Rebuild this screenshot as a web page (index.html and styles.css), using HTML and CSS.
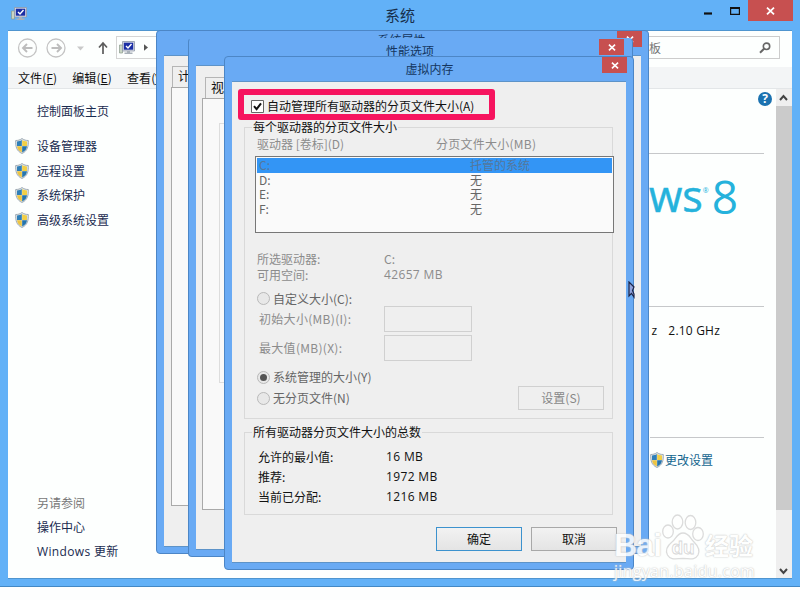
FILE: index.html
```html
<!DOCTYPE html>
<html lang="zh-CN">
<head>
  <meta charset="UTF-8" />
  <meta name="viewport" content="width=device-width, initial-scale=1.0"/>
  <title>系统</title>
  <link rel="stylesheet" href="styles.css">
</head>
<body>
  <!-- shared icons -->
  <svg class="defs" width="0" height="0">
    <symbol id="shield" viewBox="0 0 14 16">
      <path d="M7 .5C5 2 3 2.5.7 2.5.4 8.500 1.500 13 7 15.500 12.500 13 13.600 8.500 13.300 2.500 11 2.500 9 2 7 .5z" fill="#dfe6ea" stroke="#8d9ba5" stroke-width=".8"/>
      <path d="M6.800 2C5.300 3 4 3.400 2 3.500V8h4.800z" fill="#2f7fb8"/>
      <path d="M7.200 2C8.700 3 10 3.400 12 3.500V8H7.200z" fill="#f2cf45"/>
      <path d="M2 8.300c.3 3 2 4.900 4.800 6.200V8.300z" fill="#edc440"/>
      <path d="M12 8.300c-.3 3-2 4.900-4.800 6.200V8.300z" fill="#2675ad"/>
    </symbol>
    <symbol id="computer" viewBox="0 0 16 14">
      <path d="M.5 4h3v8h-3z" fill="#c9d6c4" stroke="#8a9a8c" stroke-width=".7"/>
      <path d="M3.500.5h12v9.500h-12z" fill="#d9dde5" stroke="#8f98a8" stroke-width=".8"/>
      <path d="M4.800 1.700h9.400v7H4.800z" fill="#1b2ea5"/>
      <path d="M7 5l2 2 3.500-4" fill="none" stroke="#fff" stroke-width="1.400"/>
      <path d="M8 10h3v1.500h2.500V13H5.500v-1.500H8z" fill="#a8b0b8"/>
    </symbol>
    <symbol id="cross" viewBox="0 0 9 8">
      <path d="M1 .7l7 6.600M8 .7L1 7.300" fill="none" stroke="#fff" stroke-width="1.800"/>
    </symbol>
  </svg>

  <div class="window main-window">
    <div class="main-title">
      <svg class="title-icon" width="16" height="14"><use href="#computer"/></svg>
      <h1>系统</h1>
      <div class="controls">
        <svg width="48" height="20" viewBox="0 0 48 20">
          <path d="M4 13.500h8" stroke="#111" stroke-width="2.200"/>
          <path d="M30.600 8h8.800v6.400h-8.800z" fill="none" stroke="#111" stroke-width="1.200"/>
          <path d="M30 8h10" stroke="#111" stroke-width="2"/>
        </svg>
        <div class="main-close"><svg width="9" height="8"><use href="#cross"/></svg></div>
      </div>
    </div>

    <div class="main-client">
      <div class="navbar">
        <svg width="100" height="24" viewBox="0 0 100 24">
          <g fill="none" stroke="#c4c4c4" stroke-width="1.300">
            <circle cx="19.500" cy="12" r="9"/>
            <circle cx="48" cy="12" r="9"/>
          </g>
          <path d="M24.500 12h-9M19 8l-4 4 4 4M43.500 12h9M49 8l4 4-4 4" fill="none" stroke="#bdbdbd" stroke-width="1.900"/>
          <path d="M69 10.500h7l-3.500 4z" fill="#c9c9c9"/>
          <path d="M95 18V7.500M91 11.500l4-4.500 4 4.500" fill="none" stroke="#5c5c5c" stroke-width="1.700"/>
        </svg>
        <div class="address">
          <svg width="16" height="14"><use href="#computer"/></svg>
          <svg width="4" height="7" viewBox="0 0 5 8"><path d="M0 0l5 4-5 4z" fill="#555"/></svg>
        </div>
        <div class="search">
          <span>搜索控制面板</span>
          <svg width="12" height="12" viewBox="0 0 12 12">
            <circle cx="7.500" cy="4.300" r="3.200" fill="none" stroke="#666" stroke-width="1.600"/>
            <path d="M5 6.800L1 10.800" stroke="#666" stroke-width="2"/>
          </svg>
        </div>
      </div>

      <div class="menubar">
        <span>文件(<u>F</u>)</span>
        <span>编辑(<u>E</u>)</span>
        <span>查看(<u>V</u>)</span>
      </div>

      <div class="main-body">
        <div class="sidebar">
          <a class="home">控制面板主页</a>
          <ul class="tasks">
            <li><svg width="14" height="16"><use href="#shield"/></svg>设备管理器</li>
            <li><svg width="14" height="16"><use href="#shield"/></svg>远程设置</li>
            <li><svg width="14" height="16"><use href="#shield"/></svg>系统保护</li>
            <li><svg width="14" height="16"><use href="#shield"/></svg>高级系统设置</li>
          </ul>
          <ul class="see-also">
            <li class="muted">另请参阅</li>
            <li>操作中心</li>
            <li class="latin">Windows 更新</li>
          </ul>
        </div>

        <div class="content">
          <div class="help">?</div>
          <div class="brand"><span>ows</span><sup>®</sup><b>8</b></div>
          <div class="cpu"><span>z</span><span>2.10 GHz</span></div>
          <div class="change"><svg width="14" height="16"><use href="#shield"/></svg>更改设置</div>
        </div>

        <div class="scrollbar">
          <svg width="16" height="17" viewBox="0 0 16 17"><path d="M4 11l3.500-4 3.500 4" fill="none" stroke="#444" stroke-width="2"/></svg>
          <div class="thumb"></div>
          <svg class="down" width="16" height="17" viewBox="0 0 16 17"><path d="M4 8l3.500 4L11 8" fill="none" stroke="#444" stroke-width="2"/></svg>
        </div>
      </div>
    </div>
  </div>

  <div class="window dialog props">
    <div class="dialog-title">
      <h2>系统属性</h2>
      <div class="close"><svg width="8" height="7"><use href="#cross"/></svg></div>
    </div>
    <div class="dialog-client">
      <div class="tab">计算机名</div>
      <div class="page"></div>
    </div>
  </div>

  <div class="window dialog perf">
    <div class="dialog-title">
      <h2>性能选项</h2>
      <div class="close"><svg width="8" height="7"><use href="#cross"/></svg></div>
    </div>
    <div class="dialog-client">
      <div class="tab">视觉效果</div>
      <div class="page"><div class="inner"></div></div>
    </div>
  </div>

  <div class="window dialog memory">
    <div class="dialog-title">
      <h2>虚拟内存</h2>
      <div class="close"><svg width="8" height="7"><use href="#cross"/></svg></div>
    </div>
    <div class="dialog-client">
      <label class="auto">
        <svg width="13" height="13" viewBox="0 0 13 13">
          <path d="M.5.5h12v12H.5z" fill="#fff" stroke="#666"/>
          <path d="M3 6.200l2.600 3L10 3.300" fill="none" stroke="#111" stroke-width="2"/>
        </svg>
        自动管理所有驱动器的分页文件大小(A)
      </label>

      <fieldset class="group drives">
        <legend>每个驱动器的分页文件大小</legend>
        <div class="list-head"><span>驱动器 [卷标](D)</span><span>分页文件大小(MB)</span></div>
        <div class="list">
          <div class="drive selected"><span>C:</span><span>托管的系统</span></div>
          <div class="drive"><span>D:</span><span>无</span></div>
          <div class="drive"><span>E:</span><span>无</span></div>
          <div class="drive"><span>F:</span><span>无</span></div>
        </div>
        <div class="row first"><span>所选驱动器:</span><span>C:</span></div>
        <div class="row"><span>可用空间:</span><span class="latin">42657 MB</span></div>
        <div class="radio custom"><i></i>自定义大小(C):</div>
        <div class="size"><span>初始大小(MB)(I):</span><div class="box"></div></div>
        <div class="size max"><span>最大值(MB)(X):</span><div class="box"></div></div>
        <div class="radio managed"><i class="on"></i>系统管理的大小(Y)</div>
        <div class="last">
          <div class="radio"><i></i>无分页文件(N)</div>
          <div class="btn disabled">设置(S)</div>
        </div>
      </fieldset>

      <fieldset class="group totals">
        <legend>所有驱动器分页文件大小的总数</legend>
        <div class="row"><span>允许的最小值:</span><span class="latin">16 MB</span></div>
        <div class="row"><span>推荐:</span><span class="latin">1972 MB</span></div>
        <div class="row"><span>当前已分配:</span><span class="latin">1216 MB</span></div>
      </fieldset>

      <div class="buttons">
        <div class="btn primary">确定</div>
        <div class="btn">取消</div>
      </div>
    </div>
    <div class="highlight"></div>
  </div>

  <svg class="cursor" width="7" height="18" viewBox="0 0 7 18">
    <path d="M1 1v14l2.500-2.600L6 16V13L4.500 9.500 6 6z" fill="#8ea2dc" stroke="#1c2447" stroke-width="1.200"/>
  </svg>

  <div class="watermark">
    <div class="wm-logo">
      <span class="bai">Bai</span>
      <svg width="42" height="47" viewBox="0 0 42 47">
        <g fill="#fff" stroke="#d6d6d6" stroke-width="1.300">
          <ellipse cx="6" cy="17.500" rx="5.300" ry="6.500"/>
          <ellipse cx="15.500" cy="8" rx="5.300" ry="7"/>
          <ellipse cx="28.500" cy="8.500" rx="5.300" ry="7"/>
          <ellipse cx="36" cy="20" rx="5.300" ry="6.500"/>
          <path d="M21 19c-6 0-7 6-11 9-5 4-7 8-4.500 13 3 5.500 9 3.500 15.500 3.500s12 2 15-3.500c2.500-5 0-9-4-13-4-4-5-9-11-9z"/>
        </g>
        <text x="9.500" y="40" class="du">du</text>
      </svg>
      <span class="jy">经验</span>
    </div>
    <div class="wm-url">jingyan.baidu.com</div>
  </div>
</body>
</html>
```

FILE: styles.css
```css
* {
  margin: 0;
  padding: 0;
  box-sizing: border-box;
}

body {
  position: relative;
  width: 800px;
  height: 600px;
  overflow: hidden;
  background: #fdfefe;
  font-family: 'Noto Sans CJK SC', 'Noto Sans', sans-serif;
  font-size: 12px;
  line-height: 16px;
  color: #111;
}

svg {
  display: block;
  flex: none;
}

ul {
  list-style: none;
}

.defs,
.window {
  position: absolute;
}

.latin {
  font-family: 'Open Sans', 'Noto Sans CJK SC', sans-serif;
  letter-spacing: 0.35px;
}

/* system window */
.main-window {
  left: 0;
  top: 0;
  width: 800px;
  height: 587px;
  padding: 0 8px 7px;
  background: #62b1f7;
  border-bottom: 1px solid #4388c4;
}

.main-title {
  display: flex;
  align-items: flex-start;
  height: 30px;
}

.title-icon {
  margin: 7px 0 0 3px;
}

.main-title h1 {
  flex: 1;
  padding: 6px 0 0 73px;
  font-size: 15px;
  font-weight: 400;
  line-height: 18px;
  text-align: center;
  color: #172f4b;
}

.controls {
  display: flex;
  margin-right: -1px;
}

.main-close {
  display: flex;
  align-items: center;
  justify-content: center;
  width: 45px;
  height: 21px;
  background: #c75050;
}

.main-client {
  height: 549px;
  background: #fdfffe;
  border: 1px solid #4f95cf;
  border-width: 1px 0;
}

.navbar {
  display: flex;
  height: 36px;
  padding: 5px 12px 0 0;
}

.address {
  display: flex;
  flex: 1;
  align-items: center;
  gap: 9px;
  height: 23px;
  margin-left: 8px;
  padding-left: 2px;
  border: 1px solid #d5d5d5;
}

.search {
  display: flex;
  align-items: center;
  justify-content: space-between;
  width: 192px;
  height: 23px;
  padding: 0 8px 0 0;
  border: 1px solid #ccc;
  color: #777;
}

.menubar {
  display: flex;
  gap: 15px;
  height: 22px;
  padding: 3px 10px;
  background: #f3f5f6;
  border-bottom: 1px solid #e3e6e8;
  font-size: 12px;
  letter-spacing: 0.1px;
}

.main-body {
  display: flex;
  height: 489px;
}

.sidebar {
  display: flex;
  flex-direction: column;
  width: 240px;
  padding: 14px 0 14px 29px;
  color: #1a2b50;
}

.tasks {
  margin: 15px 0 auto -22px;
}

.tasks li {
  display: flex;
  align-items: center;
  gap: 8px;
  height: 24.5px;
}

.see-also li {
  height: 24.5px;
  line-height: 24.5px;
}

.see-also .muted {
  color: #777;
}

.content {
  display: flex;
  flex: 1;
  flex-direction: column;
  align-items: flex-end;
  padding-right: 4px;
}

.help {
  width: 14px;
  height: 14px;
  margin-top: 3px;
  border-radius: 50%;
  background: #1b72b0;
  color: #fff;
  font: bold 12px/14px 'Open Sans', sans-serif;
  text-align: center;
}

.brand,
.cpu,
.change {
  display: flex;
  margin-right: 8px;
  border-top: 1px solid #c6c8ca;
}

.brand {
  justify-content: flex-end;
  width: 400px;
  height: 153px;
  margin-top: 47px;
  padding: 12px 26px 0 0;
  color: #25b2dc;
  font-family: 'Open Sans', sans-serif;
  font-size: 43px;
  line-height: 60px;
}

.brand span {
  -webkit-text-stroke: 0.5px #25b2dc;
}

.brand sup {
  font-size: 7px;
  line-height: 50px;
}

.brand b {
  margin-left: 3px;
  font-size: 46px;
  font-weight: 400;
}

.cpu {
  justify-content: flex-end;
  gap: 11px;
  width: 400px;
  height: 131px;
  padding: 16px 44px 0 0;
  font-family: 'Open Sans', sans-serif;
  letter-spacing: 0.2px;
}

.change {
  align-items: center;
  gap: 1px;
  width: 114px;
  padding-top: 14px;
  color: #14668f;
}

.scrollbar {
  display: flex;
  flex-direction: column;
  width: 16px;
  background: #efefef;
}

.thumb {
  height: 404px;
  background: #cbcbcb;
}

.down {
  margin-top: auto;
}

/* dialogs */
.dialog {
  padding: 0 7px 7px;
  background: #69aaf4;
  border: 1px solid #4c86c6;
  border-radius: 4px;
}

.dialog-title {
  display: flex;
}

.dialog-title h2 {
  flex: 1;
  font-size: 12px;
  font-weight: 400;
  text-align: center;
  color: #14365f;
}

.close {
  display: flex;
  align-items: center;
  justify-content: center;
  width: 25px;
  height: 16px;
  background: #c75050;
}

.dialog-client {
  background: #efefef;
  border: 1px solid #5d93c8;
  border-width: 1px 0;
}

.tab {
  width: 60px;
  height: 21px;
  padding: 1px 5px;
  border: 1px solid #b5b5b5;
  border-bottom: 0;
  white-space: nowrap;
  overflow: hidden;
}

.page {
  background: #f9f9f9;
  border: 1px solid #a9a9a9;
}

.props {
  left: 156px;
  top: 30px;
  width: 493px;
  height: 524px;
}

.props .dialog-title {
  height: 24px;
}

.props .dialog-title h2 {
  padding: 1px 0 0 22px;
}

.props .close {
  margin-right: -1px;
}

.props .dialog-client {
  height: 492px;
  padding: 10px 7px 0;
}

.props .tab {
  margin-left: 1px;
}

.props .page {
  height: 419px;
}

.perf {
  left: 188px;
  top: 38px;
  width: 445px;
  height: 519px;
  border-top-color: transparent;
}

.perf .dialog-title {
  height: 26px;
  padding-right: 1px;
}

.perf .dialog-title h2 {
  padding: 4px 0 0 25px;
}

.perf .dialog-client {
  height: 485px;
  padding: 11px 6px 0;
}

.perf .tab {
  width: 65px;
  margin-left: 3px;
  padding-top: 1px;
  font-size: 13px;
}

.perf .page {
  height: 412px;
  padding: 24px 16px;
}

.inner {
  height: 260px;
  border: 1px solid #ddd;
}

.memory {
  left: 224px;
  top: 56px;
  width: 410px;
  height: 514px;
}

.memory .dialog-title {
  height: 24px;
}

.memory .dialog-title h2 {
  padding: 4px 0 0 25px;
}

.memory .close {
  margin-right: -1px;
}

.memory .dialog-client {
  height: 482px;
  padding: 16px 12px 0;
}

.auto {
  display: flex;
  align-items: center;
  gap: 3px;
  height: 21px;
  padding: 0 0 5px 7px;
}

.highlight {
  position: absolute;
  left: 13px;
  top: 32px;
  width: 257px;
  height: 31px;
  border: 6px solid #f6145f;
  border-radius: 3px;
}

.group {
  width: 369px;
  min-width: 0;
  border: 1px solid #d9d9d9;
}

.group legend {
  height: 16px;
  margin-left: 7px;
  padding: 0 1px;
}

.drives {
  padding: 0 0 8px;
  color: #8c8c8c;
}

.drives legend {
  color: #111;
}

.list-head {
  display: flex;
  height: 18px;
  padding: 1px 0 0 12px;
}

.list-head span:first-child {
  width: 179px;
}

.list-head span:last-child {
  letter-spacing: 0.25px;
}

.list {
  width: 359px;
  height: 77px;
  margin: 3px 0 0 10px;
  padding: 1px;
  background: #fafafa;
  border: 1px solid #777;
}

.drive {
  display: flex;
  height: 14.7px;
  padding-left: 2px;
  line-height: 14.7px;
  color: #666;
}

.drive span:first-child {
  width: 211px;
}

.drive.selected {
  background: #3395f5;
  color: #55779b;
}

.row {
  display: flex;
  height: 15px;
  padding-left: 12px;
  line-height: 15px;
}

.row span:first-child {
  width: 127px;
}

.row.first {
  height: 16px;
  margin-top: 18px;
}

.radio {
  display: flex;
  align-items: center;
  gap: 3px;
  height: 15px;
  padding-left: 12px;
  color: #666;
}

.radio i {
  display: flex;
  align-items: center;
  justify-content: center;
  width: 13px;
  height: 13px;
  background: #e8e8e8;
  border: 1px solid #b9b9b9;
  border-radius: 50%;
}

.radio .on::after {
  content: '';
  width: 7px;
  height: 7px;
  border-radius: 50%;
  background: #555;
}

.custom {
  margin-top: 9px;
}

.size {
  display: flex;
  align-items: center;
  height: 26px;
  padding-left: 14px;
  letter-spacing: 0.3px;
}

.size span {
  width: 125px;
}

.size.max {
  margin-top: 3px;
}

.box {
  width: 88px;
  height: 26px;
  border: 1px solid #d0d0d0;
}

.managed {
  height: 16px;
  margin-top: 8px;
}

.last {
  display: flex;
  align-items: center;
  justify-content: space-between;
  margin-top: 1px;
  padding-right: 8px;
}

.totals {
  margin-top: 5px;
  padding: 7px 0;
}

.totals .row {
  height: 20px;
  padding-left: 13px;
  line-height: 20px;
}

.totals .row span:first-child {
  width: 128px;
}

.btn {
  width: 86px;
  height: 24px;
  background: linear-gradient(#f2f2f2, #e4e4e4);
  border: 1px solid #a8a8a8;
  line-height: 22px;
  text-align: center;
}

.btn.disabled {
  background: #efefef;
  border-color: #d0d0d0;
  color: #878787;
}

.btn.primary {
  border-color: #3c92ce;
}

.buttons {
  display: flex;
  gap: 9px;
  margin: 12px -4px 0 192px;
}

.cursor {
  position: absolute;
  left: 628px;
  top: 281px;
}

/* watermark */
.watermark {
  position: absolute;
  left: 614px;
  top: 514px;
  width: 150px;
  color: #fff;
  opacity: 0.85;
  text-shadow: 0 0 1px #bbb, 0 0 2px #ccc;
}

.wm-logo {
  display: flex;
  align-items: flex-end;
  height: 47px;
}

.bai {
  width: 48px;
  font: bold 32px/32px 'Liberation Sans', sans-serif;
  letter-spacing: -0.8px;
}

.du {
  fill: #fff;
  stroke: #d0d0d0;
  stroke-width: 0.8px;
  font: bold 19px 'Liberation Sans', sans-serif;
  text-shadow: none;
}

.jy {
  margin-left: 1px;
  font-size: 24px;
  font-weight: 700;
  line-height: 32px;
}

.wm-url {
  margin-top: 1px;
  font: 16px/18px 'Open Sans', sans-serif;
  letter-spacing: 0.3px;
}
```
